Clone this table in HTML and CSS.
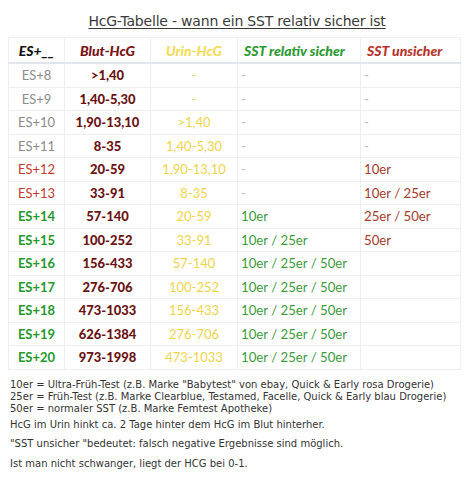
FILE: index.html
```html
<!DOCTYPE html>
<html lang="de">
<head>
<meta charset="utf-8">
<link rel="stylesheet" href="styles.css">
</head>
<body>
<div class="page">
  <h1 class="title">HcG-Tabelle - wann ein SST relativ sicher ist</h1>
  <table class="hcg">
    <colgroup>
      <col class="c-es"><col class="c-blut"><col class="c-urin"><col class="c-rel"><col class="c-uns">
    </colgroup>
    <thead>
      <tr>
        <th class="h-es">ES+__</th>
        <th class="h-blut">Blut-HcG</th>
        <th class="h-urin">Urin-HcG</th>
        <th class="h-rel">SST relativ sicher</th>
        <th class="h-uns">SST unsicher</th>
      </tr>
    </thead>
    <tbody>
      <tr><td class="es grey">ES+8</td><td class="blut">&gt;1,40</td><td class="urin">-</td><td class="rel dash">-</td><td class="uns dash">-</td></tr>
      <tr><td class="es grey">ES+9</td><td class="blut">1,40-5,30</td><td class="urin">-</td><td class="rel dash">-</td><td class="uns dash">-</td></tr>
      <tr><td class="es grey">ES+10</td><td class="blut">1,90-13,10</td><td class="urin">&gt;1,40</td><td class="rel dash">-</td><td class="uns dash">-</td></tr>
      <tr><td class="es grey">ES+11</td><td class="blut">8-35</td><td class="urin">1,40-5,30</td><td class="rel dash">-</td><td class="uns dash">-</td></tr>
      <tr><td class="es red">ES+12</td><td class="blut">20-59</td><td class="urin">1,90-13,10</td><td class="rel dash">-</td><td class="uns">10er</td></tr>
      <tr><td class="es red">ES+13</td><td class="blut">33-91</td><td class="urin">8-35</td><td class="rel dash">-</td><td class="uns">10er / 25er</td></tr>
      <tr><td class="es green">ES+14</td><td class="blut">57-140</td><td class="urin">20-59</td><td class="rel">10er</td><td class="uns">25er / 50er</td></tr>
      <tr><td class="es green">ES+15</td><td class="blut">100-252</td><td class="urin">33-91</td><td class="rel">10er / 25er</td><td class="uns">50er</td></tr>
      <tr><td class="es green">ES+16</td><td class="blut">156-433</td><td class="urin">57-140</td><td class="rel">10er / 25er / 50er</td><td class="uns"></td></tr>
      <tr><td class="es green">ES+17</td><td class="blut">276-706</td><td class="urin">100-252</td><td class="rel">10er / 25er / 50er</td><td class="uns"></td></tr>
      <tr><td class="es green">ES+18</td><td class="blut">473-1033</td><td class="urin">156-433</td><td class="rel">10er / 25er / 50er</td><td class="uns"></td></tr>
      <tr><td class="es green">ES+19</td><td class="blut">626-1384</td><td class="urin">276-706</td><td class="rel">10er / 25er / 50er</td><td class="uns"></td></tr>
      <tr><td class="es green">ES+20</td><td class="blut">973-1998</td><td class="urin">473-1033</td><td class="rel">10er / 25er / 50er</td><td class="uns"></td></tr>
    </tbody>
  </table>
  <div class="legend">
    <p>10er = Ultra-Früh-Test (z.B. Marke "Babytest" von ebay, Quick &amp; Early rosa Drogerie)</p>
    <p>25er = Früh-Test (z.B. Marke Clearblue, Testamed, Facelle, Quick &amp; Early blau Drogerie)</p>
    <p>50er = normaler SST (z.B. Marke Femtest Apotheke)</p>
  </div>
  <div class="notes">
    <p>HcG im Urin hinkt ca. 2 Tage hinter dem HcG im Blut hinterher.</p>
    <p>"SST unsicher "bedeutet: falsch negative Ergebnisse sind möglich.</p>
    <p>Ist man nicht schwanger, liegt der HCG bei 0-1.</p>
  </div>
</div>
</body>
</html>
```

FILE: styles.css
```css
html, body {
  margin: 0;
  padding: 0;
  background: #ffffff;
}
.page {
  width: 474px;
  padding: 12px 8px 0 8px;
  box-sizing: border-box;
  font-family: "DejaVu Sans", "Liberation Sans", sans-serif;
  color: #333333;
}
.title {
  margin: 0 0 6px 0;
  text-align: center;
  font-size: 14px;
  font-weight: normal;
  line-height: 19px;
  text-decoration: underline;
  text-underline-offset: 2px;
  text-decoration-thickness: 1px;
  color: #3a3a3a;
  letter-spacing: -0.2px;
}
.hcg {
  width: 452px;
  border-collapse: collapse;
  table-layout: fixed;
  font-family: Lato, "DejaVu Sans", sans-serif;
}
.c-es { width: 56px; }
.c-blut { width: 86px; }
.c-urin { width: 87px; }
.c-rel { width: 123px; }
.c-uns { width: 100px; }
.hcg th, .hcg td {
  border: 1px solid #edf0f3;
  padding: 0 3px;
  white-space: nowrap;
  overflow: hidden;
}
.hcg th {
  height: 24px;
  font-size: 14px;
  font-style: italic;
  font-weight: 900;
  text-align: center;
  border-bottom: 2px solid #e1e6ec;
}
.hcg th.h-rel, .hcg th.h-uns {
  text-align: left;
  padding-left: 6px;
}
.hcg td {
  height: 22.5px;
  font-size: 13px;
}
.h-es { color: #111111; }
.h-blut { color: #7a1414; }
.h-urin { color: #f2dc5a; }
.h-rel { color: #2d9a32; }
.h-uns { color: #b8352c; }
.es {
  text-align: center;
  font-weight: bold;
}
.es.grey { color: #8c8c8c; font-weight: normal; }
.es.red { color: #c23b2e; font-weight: normal; }
.es.green { color: #25992c; }
.blut {
  text-align: center;
  font-weight: 900;
  color: #6a1313;
}
.urin {
  text-align: center;
  color: #f0d44a;
}
.rel, .uns {
  text-align: left;
  padding-left: 3px;
}
.hcg td.rel, .hcg td.uns {
  font-size: 13.2px;
}
.rel { color: #3d9a3d; }
.uns { color: #a53a2d; }
.dash { color: #bbbbbb; }
.legend {
  margin-top: 9px;
  padding-left: 2px;
  font-size: 10px;
  line-height: 12px;
  color: #333333;
}
.legend p, .notes p {
  margin: 0;
  white-space: nowrap;
}
.notes {
  margin-top: 0;
  padding-left: 2px;
  font-size: 10px;
  line-height: 19.5px;
  color: #333333;
}
```
